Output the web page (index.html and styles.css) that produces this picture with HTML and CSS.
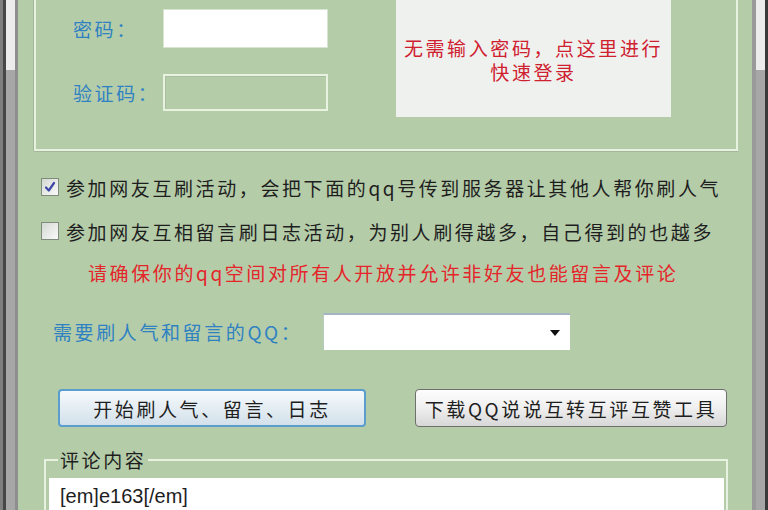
FILE: index.html
```html
<!doctype html>
<html lang="zh-CN">
  <head>
    <meta charset="UTF-8" />
    <meta name="viewport" content="width=device-width, initial-scale=1.0"/>
    <title>QQ空间互刷工具</title>
    <link rel="stylesheet" href="styles.css">
  </head>
  <body>
    <div class="window">
      <div class="edge edge-left"><div class="track"></div></div>

      <div class="client">
        <div class="group login">
          <div class="fields">
            <label class="label" for="pwd">密码：</label>
            <input class="text-input" type="password" id="pwd" />
            <label class="label" for="code">验证码：</label>
            <div class="text-input disabled" id="code"></div>
          </div>
          <div class="quick-login">
            <p>无需输入密码，点这里进行</p>
            <p>快速登录</p>
          </div>
        </div>

        <div class="check-row first">
          <span class="check checked">
            <svg width="14" height="14" viewBox="0 0 14 14"><path d="M3 7.5 L5.8 10.5 L11 3" fill="none" stroke="#3f47a6" stroke-width="2.2" stroke-linecap="round" stroke-linejoin="round"/></svg>
          </span>
          <span class="check-text">参加网友互刷活动，会把下面的qq号传到服务器让其他人帮你刷人气</span>
        </div>
        <div class="check-row second">
          <span class="check"></span>
          <span class="check-text">参加网友互相留言刷日志活动，为别人刷得越多，自己得到的也越多</span>
        </div>
        <p class="notice">请确保你的qq空间对所有人开放并允许非好友也能留言及评论</p>

        <div class="qq-row">
          <span class="label qq-label">需要刷人气和留言的QQ：</span>
          <div class="combo">
            <svg class="arrow" width="10" height="6" viewBox="0 0 10 6"><path d="M0 0 H10 L5 6 Z" fill="#111"/></svg>
          </div>
        </div>

        <div class="button-row">
          <button class="btn btn-start">开始刷人气、留言、日志</button>
          <button class="btn btn-download">下载QQ说说互转互评互赞工具</button>
        </div>

        <fieldset class="group comments">
          <legend>评论内容</legend>
          <div class="comment-box">
            <div>[em]e163[/em]</div>
            <div>[em]e120[/em]</div>
          </div>
        </fieldset>
      </div>

      <div class="edge edge-right"><div class="track"></div></div>
    </div>
  </body>
</html>
```

FILE: styles.css
```css
body {
  margin: 0;
  width: 768px;
  height: 510px;
  overflow: hidden;
  font-family: "Noto Sans CJK SC", "Noto Sans", sans-serif;
  font-size: 19px;
  letter-spacing: 2.6px;
  color: #1e1e1e;
  background: #b5cca9;
}
p {
  margin: 0;
}
.window {
  display: flex;
  height: 510px;
}
.edge {
  display: flex;
  flex: none;
}
.edge .track {
  width: 9px;
  background: linear-gradient(#ececec 0 70px, #a7a7a7 70px);
}
.edge-left {
  width: 18px;
  border-left: 3px solid #7f7f7f;
  box-sizing: border-box;
}
.edge-left::before {
  content: "";
  width: 3px;
  background: #474747;
}
.edge-left::after {
  content: "";
  width: 3px;
  background: #8e8e8e;
}
.edge-right {
  width: 16px;
  box-sizing: border-box;
  border-right: 3px solid #3a3a3a;
}
.edge-right::before {
  content: "";
  width: 4px;
  background: #9a9a9a;
}
.edge-right .track {
  width: 9px;
}
.client {
  flex: 1;
  min-width: 0;
}

/* login box */
.group.login {
  display: flex;
  align-items: flex-start;
  margin-left: 16px;
  width: 704px;
  height: 151px;
  box-sizing: border-box;
  border: 2px solid #e6f1df;
  border-top: none;
  box-shadow: 0 1px 0 #a2b898, -1px 0 0 #a2b898;
}
.fields {
  display: grid;
  grid-template-columns: 90px 165px;
  grid-auto-rows: 39px;
  row-gap: 25px;
  align-items: center;
  padding: 9px 0 0 37px;
}
.label {
  color: #2f82c2;
  white-space: nowrap;
}
.text-input {
  height: 39px;
  box-sizing: border-box;
  border: 1px solid #d8e4d2;
  background: #fff;
  font: inherit;
}
.text-input.disabled {
  height: 37px;
  margin-top: -1px;
  background: transparent;
  border: 2px solid #e7f2e0;
  box-shadow: inset 1px 1px 0 #a9bf9f;
}
.quick-login {
  margin-left: 68px;
  width: 275px;
  height: 117px;
  box-sizing: border-box;
  padding-top: 36px;
  background: #eff1ee;
  color: #cf2030;
  text-align: center;
  line-height: 24px;
}

/* options */
.check-row {
  display: flex;
  align-items: center;
  height: 22px;
  margin-left: 23px;
  white-space: nowrap;
}
.check-row.first {
  margin-top: 25px;
}
.check-row.second {
  margin-top: 22px;
}
.check {
  display: flex;
  align-items: center;
  justify-content: center;
  width: 18px;
  height: 18px;
  box-sizing: border-box;
  border: 1px solid #7f8c7b;
  background: linear-gradient(135deg, #d3d8d1, #fafafa);
  margin-right: 7px;
}
.notice {
  margin: 18px 0 0 70px;
  height: 26px;
  line-height: 26px;
  color: #e4252a;
  white-space: nowrap;
}

/* qq row */
.qq-row {
  display: flex;
  align-items: center;
  height: 37px;
  margin: 27px 0 0 35px;
}
.qq-label {
  width: 270px;
}
.combo {
  display: flex;
  align-items: center;
  justify-content: flex-end;
  width: 247px;
  height: 37px;
  box-sizing: border-box;
  padding-right: 10px;
  background: #fff;
  border-top: 2px solid #a3b5c2;
  border-left: 1px solid #b9c9bf;
}

/* buttons */
.button-row {
  display: flex;
  gap: 49px;
  margin: 39px 0 0 40px;
}
.btn {
  height: 38px;
  padding: 0;
  font: inherit;
  letter-spacing: 2.6px;
  color: #1e1e1e;
  border-radius: 4px;
}
.btn-start {
  width: 308px;
  border: 2px solid #5b9dcc;
  background: linear-gradient(#f7fafc, #e4edf3 50%, #d3e0ea);
}
.btn-download {
  width: 312px;
  border: 1px solid #6f6f6f;
  background: linear-gradient(#fdfdfd, #efefef 50%, #d7d7d7);
}

/* comments */
.group.comments {
  margin: 20px 0 0 26px;
  width: 684px;
  padding: 5px 2px 0 3px;
  border: 2px solid #e6f1df;
  box-sizing: border-box;
  height: 100px;
}
.comments legend {
  margin-left: 9px;
  padding: 0 2px;
  line-height: 26px;
}
.comment-box {
  height: 80px;
  background: #fff;
  padding: 7px 0 0 11px;
  box-sizing: border-box;
  font-family: "Liberation Sans", Arial, sans-serif;
  font-size: 20px;
  letter-spacing: 0;
  line-height: 22px;
}
```
